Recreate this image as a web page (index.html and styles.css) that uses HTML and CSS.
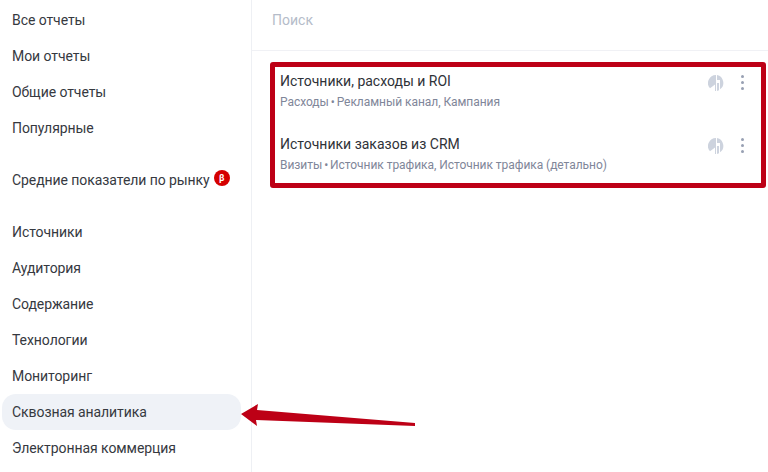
FILE: index.html
```html
<!DOCTYPE html>
<html lang="ru">
<head>
<meta charset="UTF-8">
<title>Отчеты</title>
<link rel="stylesheet" href="styles.css">
</head>
<body>
<div class="page">
  <!-- меню -->
  <nav class="sidebar">
    <div class="group">
      <a class="item">Все отчеты</a>
      <a class="item">Мои отчеты</a>
      <a class="item">Общие отчеты</a>
      <a class="item">Популярные</a>
    </div>
    <div class="group">
      <a class="item">Средние показатели по рынку
        <span class="beta">β</span>
      </a>
    </div>
    <div class="group">
      <a class="item">Источники</a>
      <a class="item">Аудитория</a>
      <a class="item">Содержание</a>
      <a class="item">Технологии</a>
      <a class="item">Мониторинг</a>
      <a class="item active">Сквозная аналитика</a>
      <a class="item">Электронная коммерция</a>
    </div>
  </nav>

  <main class="content">
    <div class="search">Поиск</div>
    <div class="results">
      <div class="report">
        <div class="report-text">
          <div class="report-title">Источники, расходы и ROI</div>
          <div class="report-meta">Расходы <span class="sep">•</span> Рекламный канал, Кампания</div>
        </div>
        <svg class="chart-icon" viewBox="0 0 16 16">
          <path d="M8 0a8 8 0 0 0-6 13.3L7 9.5V16h1zM9 0v5h3v9.3A8 8 0 0 0 9 0zM9 8h2v7.2l-2 .7z"/>
        </svg>
        <span class="dots"><i></i><i></i><i></i></span>
      </div>
      <div class="report">
        <div class="report-text">
          <div class="report-title">Источники заказов из CRM</div>
          <div class="report-meta">Визиты <span class="sep">•</span> Источник трафика, Источник трафика (детально)</div>
        </div>
        <svg class="chart-icon" viewBox="0 0 16 16">
          <path d="M8 0a8 8 0 0 0-6 13.3L7 9.5V16h1zM9 0v5h3v9.3A8 8 0 0 0 9 0zM9 8h2v7.2l-2 .7z"/>
        </svg>
        <span class="dots"><i></i><i></i><i></i></span>
      </div>
    </div>
  </main>

  <!-- стрелка поверх скриншота -->
  <svg class="arrow" viewBox="0 0 768 472">
    <path d="M241 414 L258 404 L257 410 L415 423 L415 426 L256 420 L257 426 Z"/>
  </svg>
</div>
</body>
</html>
```

FILE: styles.css
```css
body {
  margin: 0;
  background-color: #fff;
  font-family: Roboto, "Noto Sans", sans-serif;
  color: #36393f;
}
.page {
  position: relative;
  display: flex;
  width: 768px;
  height: 472px;
  overflow: hidden;
}
.sidebar {
  box-sizing: border-box;
  flex: none;
  width: 252px;
  padding: 2px 10px 0 2px;
  border-right: 1px solid #eef0f4;
}
.group {
  margin-bottom: 16px;
}
.item {
  display: flex;
  align-items: center;
  gap: 4px;
  height: 36px;
  padding-left: 10px;
  border-radius: 14px;
  font-size: 14px;
  letter-spacing: -0.07px;
}
.item.active {
  background-color: #eff2f7;
}
.beta {
  display: flex;
  justify-content: center;
  align-items: center;
  width: 16px;
  height: 16px;
  margin-top: -4px;
  border-radius: 50%;
  background-color: #d50000;
  color: #fff;
  font-size: 9px;
  font-weight: bold;
}
.content {
  flex: 1;
}
.search {
  box-sizing: border-box;
  height: 51px;
  padding: 12px 20px;
  border-bottom: 1px solid #f0f1f5;
  color: #b5bcc9;
  font-size: 14px;
}
.results {
  box-sizing: border-box;
  width: 496px;
  height: 126px;
  margin: 11px 0 0 18px;
  padding: 4px 16px 0 5px;
  border: 5px solid #bd0016;
  border-radius: 3px;
}
.report {
  display: flex;
  align-items: flex-start;
  height: 63px;
}
.report-text {
  flex: 1;
}
.report-title {
  font-size: 14px;
  line-height: 20px;
  color: #2f3238;
}
.report-meta {
  margin-top: 2px;
  font-size: 12px;
  line-height: 18px;
  color: #7f8699;
  letter-spacing: -0.05px;
}
.sep {
  margin: 0 -1px;
}
.chart-icon {
  width: 16px;
  height: 16px;
  margin-top: 4px;
  fill: #cdd3de;
}
.dots {
  display: flex;
  flex-direction: column;
  gap: 3px;
  width: 4px;
  margin: 4px 0 0 17px;
}
.dots i {
  width: 3px;
  height: 3px;
  border-radius: 50%;
  background-color: #98a0b3;
}
.arrow {
  position: absolute;
  top: 0;
  left: 0;
  width: 768px;
  height: 472px;
  fill: #bd0016;
  pointer-events: none;
}
```
